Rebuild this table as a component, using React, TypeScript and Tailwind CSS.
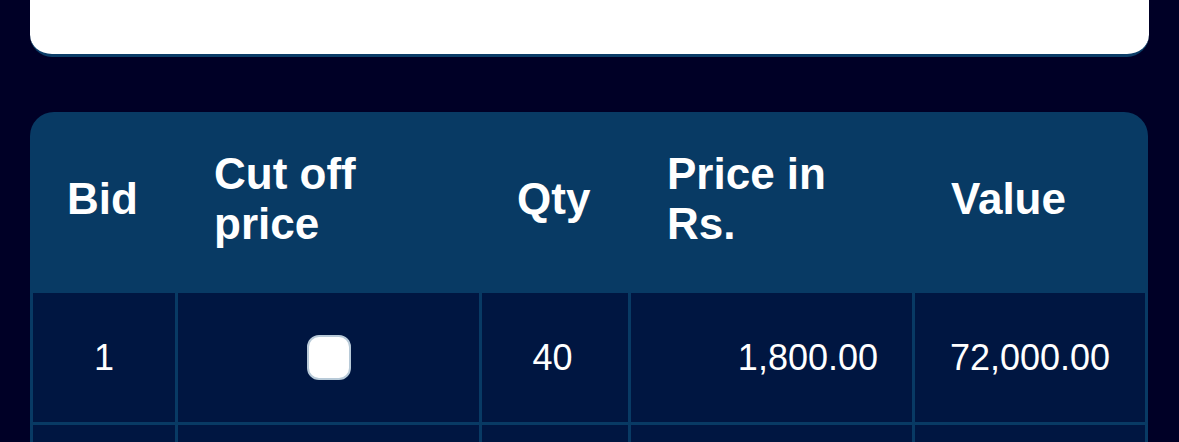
import React from "react";

type Bid = {
  id: number;
  cutOff: boolean;
  qty: number;
  price: number;
};

const bids: Bid[] = [{ id: 1, cutOff: false, qty: 40, price: 1800 }];

const fmt = (n: number) =>
  n.toLocaleString("en-IN", { minimumFractionDigits: 2, maximumFractionDigits: 2 });

const cols = "grid grid-cols-[142px_301px_146px_281px_230px] gap-x-[3px]";
const cell = "flex h-[129px] items-center bg-[#001641]";

export default function App() {
  return (
    <div
      className="h-[442px] w-[1179px] overflow-hidden bg-[#000026] text-white"
      style={{ fontFamily: '"Liberation Sans", Arial, Helvetica, sans-serif' }}
    >
      {/* card above */}
      <div className="mx-[30px] h-[57px] rounded-b-[22px] border-b-[3px] border-[#0b3d68] bg-white" />

      {/* bids table */}
      <div className="mx-[30px] mt-[55px] w-[1118px] overflow-hidden rounded-t-[24px] bg-[#083a64]">
        <div className={`${cols} h-[181px] items-center px-[3px] pb-[8px] text-[44px] font-bold leading-[50px]`}>
          <div className="pl-[34px]">Bid</div>
          <div className="pl-[36px] pr-[20px]">Cut off price</div>
          <div className="pl-[35px]">Qty</div>
          <div className="pl-[36px] pr-[20px]">Price in Rs.</div>
          <div className="pl-[36px]">Value</div>
        </div>

        <div className={`${cols} gap-y-[3px] px-[3px] pb-[3px] text-[36px] leading-none`}>
          {bids.map((b) => (
            <React.Fragment key={b.id}>
              <div className={`${cell} justify-center`}>{b.id}</div>
              <div className={`${cell} justify-center`}>
                <div className="h-[45px] w-[44px] rounded-[12px] border-2 border-[#b8cad8] bg-white" />
              </div>
              <div className={`${cell} justify-center pr-[5px]`}>{b.qty}</div>
              <div className={`${cell} justify-end pr-[34px]`}>{fmt(b.price)}</div>
              <div className={`${cell} justify-center`}>{fmt(b.qty * b.price)}</div>
            </React.Fragment>
          ))}
          {/* next row, only its top edge is in view */}
          <div className={cell} />
          <div className={cell} />
          <div className={cell} />
          <div className={cell} />
          <div className={cell} />
        </div>
      </div>
    </div>
  );
}
